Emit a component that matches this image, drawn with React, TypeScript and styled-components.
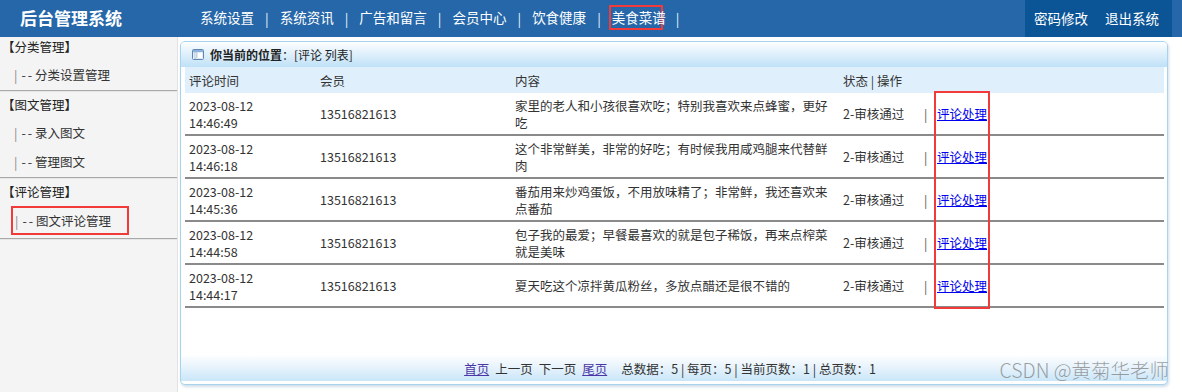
import React from "react";
import styled, { createGlobalStyle } from "styled-components";

const Global = createGlobalStyle`
  html, body { margin: 0; padding: 0; background: #fff; }
  body { font-family: "Noto Sans CJK SC", "Noto Sans", sans-serif; font-size: 12.5px; color: #333; }
  * { box-sizing: border-box; }
`;

const Page = styled.div`
  width: 1182px;
  height: 392px;
  overflow: hidden;
  position: relative;
  display: flex;
  flex-direction: column;
`;

const Header = styled.header`
  height: 37px;
  flex: none;
  background: #2567a8;
  display: flex;
  align-items: stretch;
  color: #fff;
`;

const Title = styled.div`
  width: 200px;
  padding-left: 20px;
  font-size: 17px;
  font-weight: bold;
  line-height: 35px;
`;

const Nav = styled.nav`
  flex: 1;
  display: flex;
  align-items: center;
  font-size: 13.5px;
  padding-bottom: 2px;
`;

const NavItem = styled.span<{ $marked?: boolean }>`
  white-space: nowrap;
  line-height: 19px;
  ${(p) =>
    p.$marked
      ? `
    display: inline-flex;
    align-items: center;
    width: 54px;
    height: 25px;
    margin-left: -3px;
    padding-left: 1px;
    border: 2px solid #f23a3a;
    overflow: visible;
  `
      : ""}
`;

const Sep = styled.span<{ $afterMarked?: boolean }>`
  margin: 0 11px;
  margin-left: ${(p) => (p.$afterMarked ? "13px" : "11px")};
  color: #e8f2fb;
`;

const UserBox = styled.div`
  width: 147px;
  margin-right: 10px;
  background: #0b5596;
  display: flex;
  align-items: center;
  gap: 17px;
  padding-left: 9px;
  padding-bottom: 2px;
  font-size: 13.5px;
`;

const Body = styled.div`
  flex: 1;
  display: flex;
  align-items: flex-start;
`;

const Sidebar = styled.aside`
  width: 178px;
  align-self: stretch;
  background: #f4f4f4;
  border-right: 1px solid #e2e2e2;
  flex: none;
`;

const Group = styled.div`
  border-bottom: 1px solid #a9a9a9;
  box-shadow: 0 1px 0 #e6e6e6;
  margin-bottom: 1px;
  padding-bottom: 1px;
`;

const GroupTitle = styled.div<{ $first?: boolean }>`
  height: ${(p) => (p.$first ? "23px" : "26px")};
  line-height: ${(p) => (p.$first ? "19px" : "26px")};
  padding-left: 2px;
  color: #222;
`;

const SideItem = styled.div<{ $marked?: boolean }>`
  height: 29px;
  display: flex;
  align-items: center;
  color: #333;
  margin-left: ${(p) => (p.$marked ? "11px" : "0")};
  padding-left: ${(p) => (p.$marked ? "2px" : "14px")};
  width: ${(p) => (p.$marked ? "118px" : "auto")};
  border: ${(p) => (p.$marked ? "2px solid #f23a3a" : "none")};
  margin-bottom: ${(p) => (p.$marked ? "2px" : "0")};
  margin-top: ${(p) => (p.$marked ? "1px" : "0")};
`;

const Bar = styled.span`
  color: #888;
  margin-right: 4px;
`;

const Dash = styled.span`
  letter-spacing: 2px;
  margin-right: 1px;
`;

const Panel = styled.section`
  margin: 4px 0 0 2px;
  width: 988px;
  height: 344px;
  border: 1px solid #a9d2ef;
  border-radius: 5px;
  box-shadow: 1px 2px 3px rgba(120, 160, 190, 0.35);
  background: #fff;
  display: flex;
  flex-direction: column;
  overflow: hidden;
`;

const PanelHead = styled.div`
  height: 25px;
  flex: none;
  background: linear-gradient(#fdfeff, #e4f2fc 40%, #bfe1f7);
  display: flex;
  align-items: center;
  padding-left: 11px;
  gap: 6px;
  font-size: 12px;
  color: #222;
`;

const Strong = styled.b`
  font-weight: bold;
`;

const TableWrap = styled.div`
  margin: 0 3px 0 4px;
  position: relative;
`;

const Row = styled.div<{ $head?: boolean }>`
  display: grid;
  grid-template-columns: 131px 195px 328px 1fr;
  padding-left: 4px;
  align-items: center;
  min-height: ${(p) => (p.$head ? "26px" : "43px")};
  background: ${(p) => (p.$head ? "#dff0fc" : "#fff")};
  border-bottom: ${(p) => (p.$head ? "none" : "2px solid #8a8a8a")};
  line-height: 17px;
  color: #333;
`;

const Cell = styled.div``;

const Content = styled.div`
  max-width: 316px;
`;

const Ops = styled.div`
  display: flex;
  align-items: center;
`;

const Status = styled.span`
  width: 81px;
`;

const Pipe = styled.span`
  width: 13px;
  color: #555;
`;

const Link = styled.a`
  color: #0000ee;
  text-decoration: underline;
  cursor: pointer;
`;

const Marker = styled.div`
  position: absolute;
  left: 749px;
  top: 24px;
  width: 56px;
  height: 218px;
  border: 2px solid #f23a3a;
  pointer-events: none;
`;

const Spacer = styled.div`
  flex: 1;
`;

const Footer = styled.div`
  height: 25px;
  margin-bottom: 3px;
  flex: none;
  background: linear-gradient(#fbfdff, #e7f3fc 45%, #c9e6f8);
  display: flex;
  align-items: center;
  justify-content: center;
  gap: 6px;
  font-size: 12.5px;
  color: #333;
  padding-right: 8px;
`;

const PageLink = styled.a`
  color: #4b36a6;
  text-decoration: underline;
`;

const Stats = styled.span`
  margin-left: 8px;
`;

const Watermark = styled.div`
  position: absolute;
  right: 13px;
  bottom: 8px;
  font-family: "Noto Sans CJK SC", "Noto Sans", sans-serif;
  font-size: 19.5px;
  font-weight: 300;
  color: rgba(120, 120, 120, 0.7);
`;

const rows = [
  ["2023-08-12", "14:46:49", "家里的老人和小孩很喜欢吃；特别我喜欢来点蜂蜜，更好吃"],
  ["2023-08-12", "14:46:18", "这个非常鲜美，非常的好吃；有时候我用咸鸡腿来代替鲜肉"],
  ["2023-08-12", "14:45:36", "番茄用来炒鸡蛋饭，不用放味精了；非常鲜，我还喜欢来点番茄"],
  ["2023-08-12", "14:44:58", "包子我的最爱；早餐最喜欢的就是包子稀饭，再来点榨菜就是美味"],
  ["2023-08-12", "14:44:17", "夏天吃这个凉拌黄瓜粉丝，多放点醋还是很不错的"],
];

const navs = ["系统设置", "系统资讯", "广告和留言", "会员中心", "饮食健康", "美食菜谱"];

function WinIcon() {
  return (
    <svg width="12" height="11" viewBox="0 0 12 11">
      <rect x="0.5" y="0.5" width="11" height="10" rx="1" fill="#fff" stroke="#5f87b3" />
      <rect x="1" y="1" width="10" height="2" fill="#8fb2d8" />
      <rect x="2" y="3.5" width="2.5" height="6" fill="#dbe6f2" stroke="#9bb4cf" strokeWidth="0.5" />
      <rect x="5.5" y="3.5" width="5" height="6" fill="#fff" stroke="#c4d4e6" strokeWidth="0.5" />
    </svg>
  );
}

function Item({ label, marked }: { label: string; marked?: boolean }) {
  return (
    <SideItem $marked={marked}>
      <Bar>|</Bar>
      <Dash>--</Dash>
      {label}
    </SideItem>
  );
}

export default function App() {
  return (
    <Page>
      <Global />
      <Header>
        <Title>后台管理系统</Title>
        <Nav>
          {navs.map((n, i) => (
            <React.Fragment key={n}>
              <NavItem $marked={i === navs.length - 1}>{n}</NavItem>
              <Sep $afterMarked={i === navs.length - 1}>|</Sep>
            </React.Fragment>
          ))}
        </Nav>
        <UserBox>
          <span>密码修改</span>
          <span>退出系统</span>
        </UserBox>
      </Header>
      <Body>
        <Sidebar>
          <Group>
            <GroupTitle $first>【分类管理】</GroupTitle>
            <Item label="分类设置管理" />
          </Group>
          <Group>
            <GroupTitle>【图文管理】</GroupTitle>
            <Item label="录入图文" />
            <Item label="管理图文" />
          </Group>
          <Group>
            <GroupTitle>【评论管理】</GroupTitle>
            <Item label="图文评论管理" marked />
          </Group>
        </Sidebar>
        <Panel>
          <PanelHead>
            <WinIcon />
            <span>
              <Strong>你当前的位置</Strong>：[评论 列表]
            </span>
          </PanelHead>
          <TableWrap>
            <Row $head>
              <Cell>评论时间</Cell>
              <Cell>会员</Cell>
              <Cell>内容</Cell>
              <Cell>状态 | 操作</Cell>
            </Row>
            {rows.map((r) => (
              <Row key={r[1]}>
                <Cell>
                  {r[0]}
                  <br />
                  {r[1]}
                </Cell>
                <Cell>13516821613</Cell>
                <Content>{r[2]}</Content>
                <Ops>
                  <Status>2-审核通过</Status>
                  <Pipe>|</Pipe>
                  <Link>评论处理</Link>
                </Ops>
              </Row>
            ))}
            <Marker />
          </TableWrap>
          <Spacer />
          <Footer>
            <PageLink>首页</PageLink>
            <span>上一页</span>
            <span>下一页</span>
            <PageLink>尾页</PageLink>
            <Stats>总数据：5 | 每页：5 | 当前页数：1 | 总页数：1</Stats>
          </Footer>
        </Panel>
      </Body>
      <Watermark>CSDN @黄菊华老师</Watermark>
    </Page>
  );
}
